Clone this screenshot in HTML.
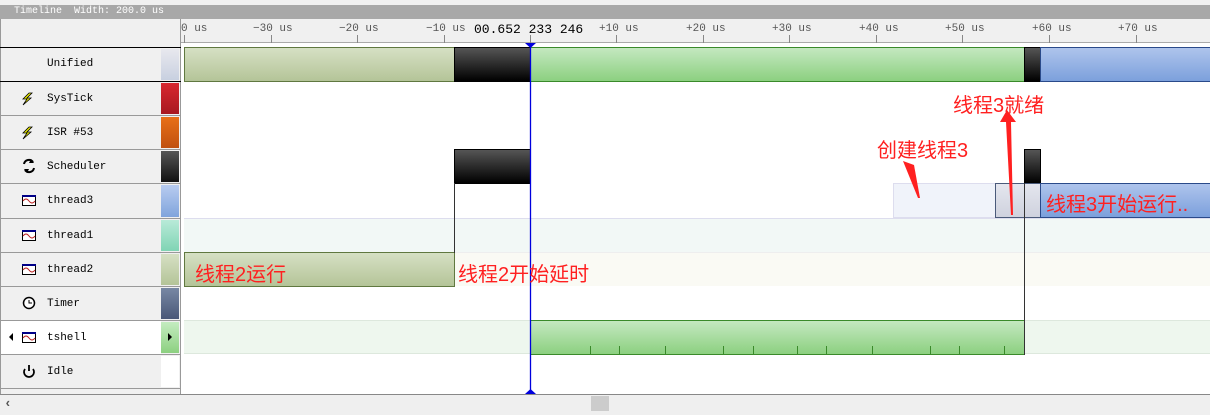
<!DOCTYPE html><html><head><meta charset="utf-8"><style>
*{margin:0;padding:0;box-sizing:border-box}
body{width:1210px;height:415px;overflow:hidden;background:#fff;position:relative;font-family:"Liberation Mono",monospace;font-size:11px}
div{position:absolute}
.lbl{left:47px;font-size:11px;color:#000;font-family:"Liberation Mono","Noto Serif CJK SC",monospace}
.sw{left:161px;width:18px}
.r{color:#ff2020;font-family:"Liberation Sans","Noto Sans CJK SC",sans-serif;font-size:20px;white-space:nowrap}
.tk{top:35px;width:1px;height:8px;background:#888}
.tl{top:23px;font-size:11px;color:#555;white-space:nowrap}
.blk{background:linear-gradient(#555,#000);border:1px solid #000}
.grn{background:linear-gradient(#c4e8c0,#8cd080);border:1px solid #3a8a2a}
.olv{background:linear-gradient(#d6e0c4,#b4c498);border:1px solid #607840}
.blu{background:linear-gradient(#aec4ec,#7ca0dc);border:1px solid #2a4a8a}
</style></head><body>
<div style="left:0;top:0;width:1210px;height:5px;background:#f0f0f0"></div>
<div style="left:0;top:5px;width:1210px;height:14px;background:#a8a8a8;color:#fff;font-size:10px;padding-left:14px;line-height:14px;white-space:pre">Timeline  Width: 200.0 us</div>
<div style="left:0;top:19px;width:181px;height:375px;background:#f0f0f0;border-right:1px solid #999;border-left:1px solid #999"></div>
<div style="left:181px;top:19px;width:1029px;height:24px;background:#f0f0f0;border-bottom:1px solid #aaa"></div>
<div style="left:0;top:47px;width:181px;height:1px;background:#000"></div>
<div style="left:0;top:81px;width:181px;height:1px;background:#000"></div>
<div style="left:0;top:115px;width:181px;height:1px;background:#999"></div>
<div style="left:0;top:149px;width:181px;height:1px;background:#999"></div>
<div style="left:0;top:183px;width:181px;height:1px;background:#999"></div>
<div style="left:0;top:218px;width:181px;height:1px;background:#999"></div>
<div style="left:0;top:252px;width:181px;height:1px;background:#999"></div>
<div style="left:0;top:286px;width:181px;height:1px;background:#999"></div>
<div style="left:0;top:320px;width:181px;height:1px;background:#999"></div>
<div style="left:1px;top:321px;width:160px;height:33px;background:#fff"></div>
<div style="left:0;top:354px;width:181px;height:1px;background:#999"></div>
<div style="left:0;top:388px;width:181px;height:1px;background:#999"></div>
<div class="sw" style="top:49px;height:31px;background:linear-gradient(#e8e8ee,#c8d0e0)"></div>
<div class="sw" style="top:83px;height:31px;background:linear-gradient(#d82830,#a81820)"></div>
<div class="sw" style="top:117px;height:31px;background:linear-gradient(#e87018,#c05010)"></div>
<div class="sw" style="top:151px;height:31px;background:linear-gradient(#555,#111)"></div>
<div class="sw" style="top:185px;height:32px;background:linear-gradient(#b8ccf0,#80a4dc)"></div>
<div class="sw" style="top:220px;height:31px;background:linear-gradient(#b8ead8,#80d4b4)"></div>
<div class="sw" style="top:254px;height:31px;background:linear-gradient(#d6e0c4,#b4c498)"></div>
<div class="sw" style="top:288px;height:31px;background:linear-gradient(#7888a4,#4a5878)"></div>
<div class="sw" style="top:322px;height:31px;background:linear-gradient(#c4ecc0,#8cd080)"></div>
<div style="left:168px;top:333px;width:0;height:0;border-top:4px solid transparent;border-bottom:4px solid transparent;border-left:4px solid #000"></div>
<div style="left:9px;top:333px;width:0;height:0;border-top:4px solid transparent;border-bottom:4px solid transparent;border-right:4px solid #000"></div>
<div class="sw" style="top:356px;height:31px;background:#fff"></div>
<div class="lbl" style="top:58px">Unified</div>
<div class="lbl" style="top:93px">SysTick</div>
<div class="lbl" style="top:127px">ISR #53</div>
<div class="lbl" style="top:161px">Scheduler</div>
<div class="lbl" style="top:195px">thread3</div>
<div class="lbl" style="top:230px">thread1</div>
<div class="lbl" style="top:264px">thread2</div>
<div class="lbl" style="top:298px">Timer</div>
<div class="lbl" style="top:332px">tshell</div>
<div class="lbl" style="top:366px">Idle</div>
<svg style="position:absolute;left:0;top:0" width="60" height="390">
<g fill="#ee0" stroke="#000" stroke-width="0.8"><path d="M29 93l-6 6h4l-4 6 8-7h-4l5-5z"/><path d="M29 127l-6 6h4l-4 6 8-7h-4l5-5z"/></g>
<g fill="none" stroke="#000" stroke-width="2"><path d="M24 164a5 5 0 0 1 9-2M34 168a5 5 0 0 1-9 2"/></g>
<path d="M31 159l3 4h-5zM27 173l-3-4h5z" fill="#000"/>
<g fill="#fff" stroke="#000" stroke-width="1">
<rect x="22.5" y="195.5" width="13" height="10"/><rect x="22.5" y="230.5" width="13" height="10"/><rect x="22.5" y="264.5" width="13" height="10"/><rect x="22.5" y="332.5" width="13" height="10"/>
</g>
<g fill="#008"><rect x="22" y="195" width="14" height="2"/><rect x="22" y="230" width="14" height="2"/><rect x="22" y="264" width="14" height="2"/><rect x="22" y="332" width="14" height="2"/></g>
<g fill="none" stroke-width="1"><path d="M23 201q3-4 6 0t6 0" stroke="#b22"/><path d="M23 236q3-4 6 0t6 0" stroke="#b22"/><path d="M23 270q3-4 6 0t6 0" stroke="#b22"/><path d="M23 338q3-4 6 0t6 0" stroke="#b22"/></g>
<circle cx="29" cy="303" r="5.5" fill="#fff" stroke="#000" stroke-width="1.5"/><path d="M29 300v3h3" stroke="#000" fill="none"/>
<path d="M25 369a5 5 0 1 0 8 0M29 365v6" stroke="#000" stroke-width="1.8" fill="none"/>
</svg>
<div class="tl" style="left:181px">0 us</div>
<div class="tl" style="left:253px">−30 us</div><div class="tk" style="left:271px"></div>
<div class="tl" style="left:339px">−20 us</div><div class="tk" style="left:357px"></div>
<div class="tl" style="left:426px">−10 us</div><div class="tk" style="left:444px"></div>
<div style="left:474px;top:22px;font-size:13px;color:#000">00.652 233 246</div><div class="tk" style="left:530px"></div>
<div class="tl" style="left:599px">+10 us</div><div class="tk" style="left:616px"></div>
<div class="tl" style="left:686px">+20 us</div><div class="tk" style="left:703px"></div>
<div class="tl" style="left:772px">+30 us</div><div class="tk" style="left:789px"></div>
<div class="tl" style="left:859px">+40 us</div><div class="tk" style="left:876px"></div>
<div class="tl" style="left:945px">+50 us</div><div class="tk" style="left:962px"></div>
<div class="tl" style="left:1032px">+60 us</div><div class="tk" style="left:1049px"></div>
<div class="tl" style="left:1118px">+70 us</div><div class="tk" style="left:1136px"></div>
<div class="tk" style="left:184px"></div>
<div style="left:184px;top:218px;width:1026px;height:34px;background:#f2f8f6;border-top:1px solid #dde"></div>
<div style="left:184px;top:252px;width:1026px;height:34px;background:#fafaf4;border-top:1px solid #eee"></div>
<div style="left:184px;top:320px;width:1026px;height:34px;background:#eef7ee;border-top:1px solid #dde8dd;border-bottom:1px solid #dde8dd"></div>
<div class="olv" style="left:184px;top:47px;width:271px;height:35px"></div>
<div class="blk" style="left:454px;top:47px;width:77px;height:35px"></div>
<div class="grn" style="left:530px;top:47px;width:495px;height:35px"></div>
<div class="blk" style="left:1024px;top:47px;width:17px;height:35px"></div>
<div class="blu" style="left:1040px;top:47px;width:175px;height:35px"></div>
<div class="blk" style="left:454px;top:149px;width:77px;height:35px"></div>
<div class="blk" style="left:1024px;top:149px;width:17px;height:35px"></div>
<div style="left:893px;top:183px;width:103px;height:35px;background:#f0f3fa;border:1px solid #dde"></div>
<div style="left:995px;top:183px;width:46px;height:35px;background:linear-gradient(#e4e6ee,#cfd2de);border:1px solid #4a5a7a"></div>
<div class="blu" style="left:1040px;top:183px;width:175px;height:35px"></div>
<div class="olv" style="left:184px;top:252px;width:271px;height:35px"></div>
<div class="grn" style="left:530px;top:320px;width:495px;height:35px"></div>
<svg style="position:absolute;left:0;top:0" width="1210" height="415">
<g stroke="#3a8a2a"><path d="M590.5 346v8M619.5 346v8M665.5 346v8M723.5 346v8M753.5 346v8M797.5 346v8M826.5 346v8M872.5 346v8M930.5 346v8M959.5 346v8M1004.5 346v8"/></g>
<path d="M454.5 183v70M1024.5 183v172" stroke="#333"/>
<path d="M530.5 43v351" stroke="#00d" stroke-width="1.3"/>
<path d="M525 43h11l-5.5 5z" fill="#00d"/><path d="M525 394h11l-5.5-5z" fill="#00d"/>
<path d="M903 161l11 4 6 33-2 0z" fill="#ff2020"/>
<path d="M1007 110l-7 12 6 0 5 93 2 0-2-93 5 0z" fill="#ff2020"/>
</svg>
<div class="r" style="left:195px;top:258px">线程2运行</div>
<div class="r" style="left:458px;top:258px">线程2开始延时</div>
<div class="r" style="left:877px;top:134px">创建线程3</div>
<div class="r" style="left:953px;top:89px">线程3就绪</div>
<div class="r" style="left:1046px;top:188px">线程3开始运行..</div>
<div style="left:0;top:394px;width:1210px;height:21px;background:#efefef;border-top:1px solid #888"></div>
<div style="left:591px;top:396px;width:18px;height:15px;background:#ccc"></div>
<div style="left:4px;top:396px;font-size:13px;color:#555;font-weight:bold">‹</div>
</body></html>
